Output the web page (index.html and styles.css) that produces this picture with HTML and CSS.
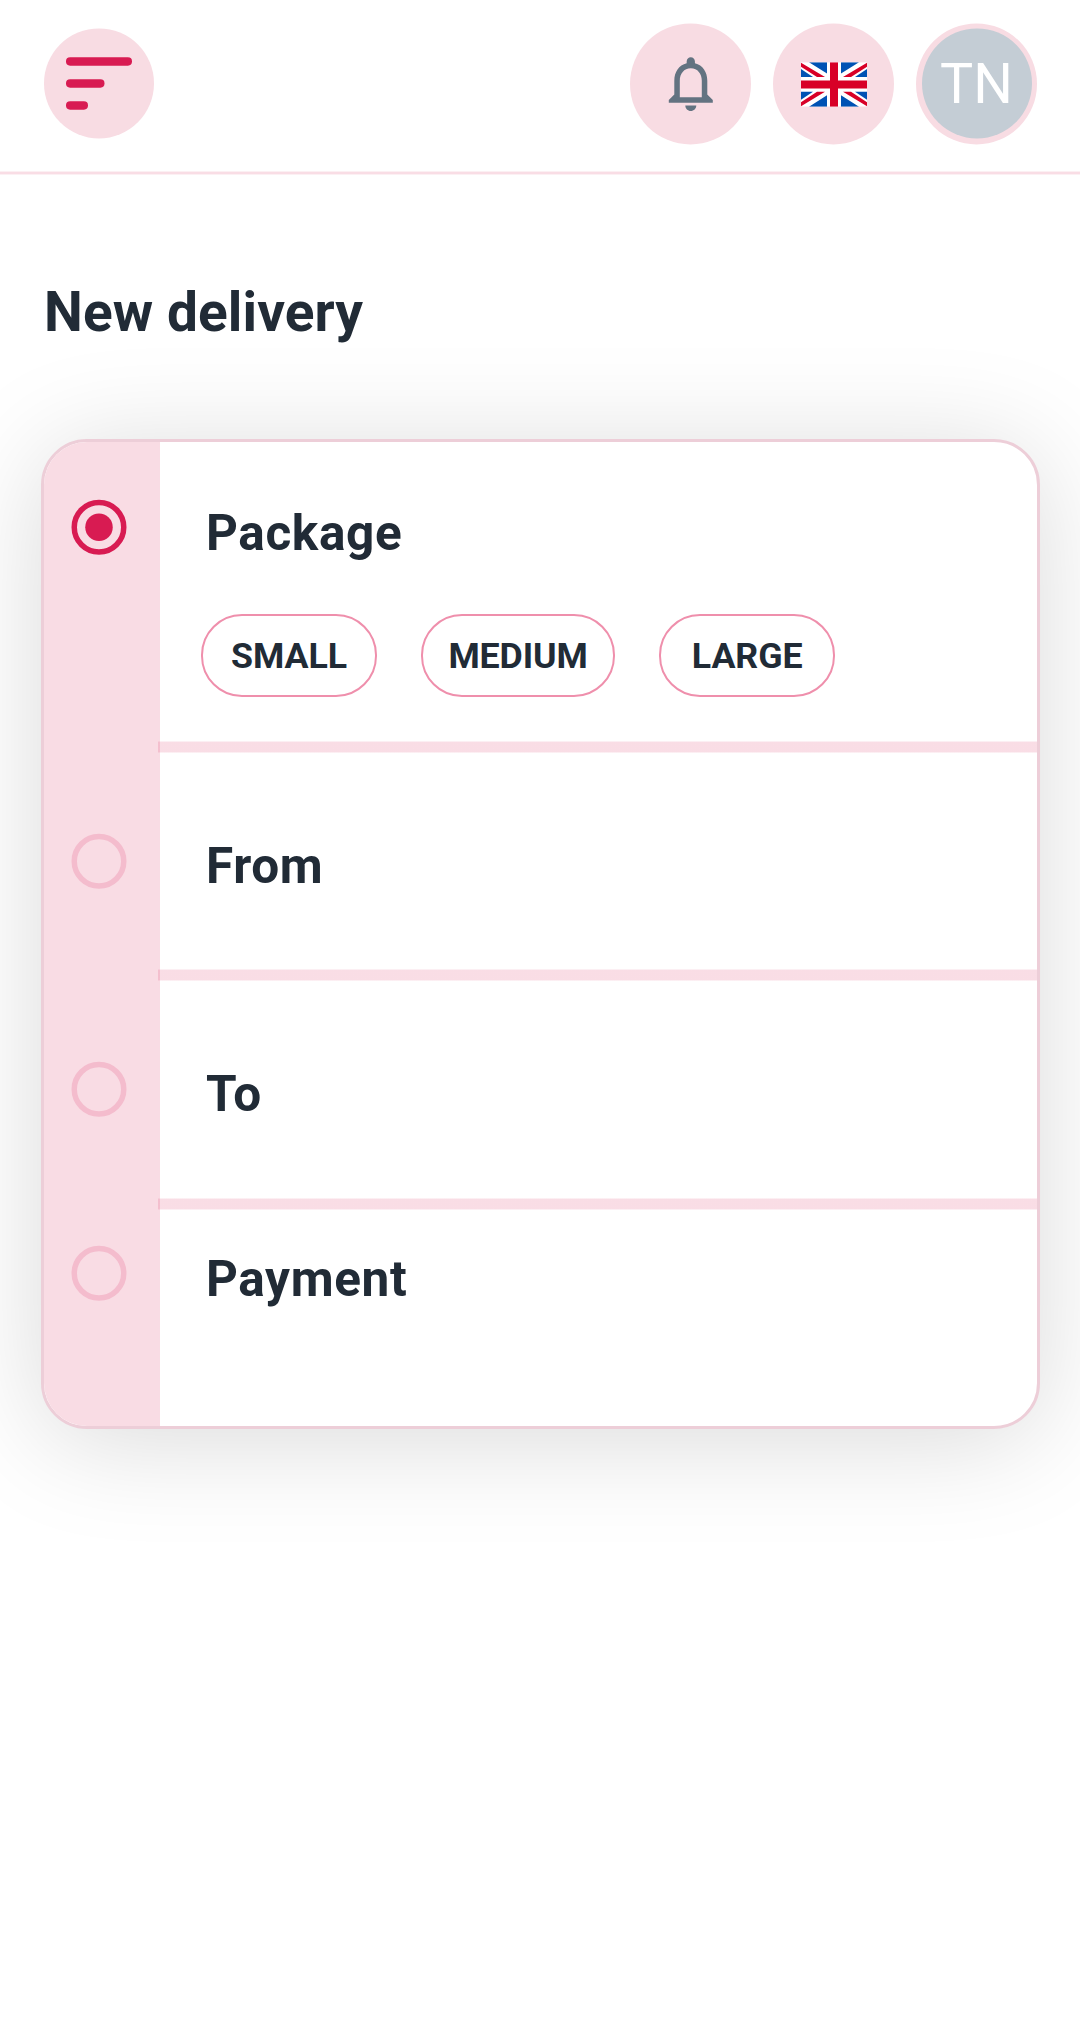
FILE: index.html
```html
<!DOCTYPE html>
<html lang="en">
<head>
<meta charset="utf-8">
<title>New delivery</title>
<link rel="stylesheet" href="styles.css">
</head>
<body>
<header class="topbar">
  <button class="menu" aria-label="Menu">
    <svg width="110" height="112" viewBox="0 0 110 112">
      <circle class="disc" cx="55" cy="55.4" r="55"/>
      <g class="bars">
        <rect x="22" y="29.2" width="66" height="8.5" rx="4.1"/>
        <rect x="22" y="51.2" width="38.5" height="8.5" rx="4.1"/>
        <rect x="22" y="73.2" width="22" height="8.5" rx="4.1"/>
      </g>
    </svg>
  </button>
  <nav class="actions">
    <button aria-label="Notifications">
      <svg width="121" height="122" viewBox="0 0 121 122">
        <circle class="disc" cx="60.5" cy="60.9" r="60.5"/>
        <path class="bell" transform="translate(27.8 27.4) scale(2.75)" d="M12 22c1.100 0 2-.9 2-2h-4c0 1.100.9 2 2 2zm6-6v-5c0-3.070-1.630-5.640-4.500-6.320V4c0-.83-.67-1.500-1.500-1.500s-1.500.67-1.500 1.500v.68C7.640 5.360 6 7.920 6 11v5l-2 2v1h16v-1l-2-2zm-2 1H8v-6c0-2.480 1.510-4.500 4-4.500s4 2.020 4 4.500v6z"/>
      </svg>
    </button>
    <button aria-label="Language: English">
      <svg width="121" height="122" viewBox="0 0 121 122">
        <circle class="disc" cx="60.5" cy="60.9" r="60.5"/>
        <svg x="28" y="39.2" width="66" height="44.5" viewBox="0 0 66 45" preserveAspectRatio="none">
          <rect class="white" width="66" height="45"/>
          <path class="blue" d="M8 0H26V11.500zM0 7L12 15H0zM58 0H40V11.500zM66 7L54 15H66zM8 45H26V33.500zM0 38L12 30H0zM58 45H40V33.500zM66 38L54 30H66z"/>
          <path class="red" d="M0 .5V4.500L16 15H24zM66 .5V4.500L50 15H42zM0 44.500V40.500L16 30H24zM66 44.500V40.500L50 30H42z"/>
          <path class="red" d="M29 0H37V18.500H66V26.500H37V45H29V26.500H0V18.500H29z"/>
        </svg>
      </svg>
    </button>
    <button class="avatar" aria-label="Account">
      <svg width="121" height="122" viewBox="0 0 121 122">
        <circle class="disc" cx="60.5" cy="60.9" r="60.5"/>
        <circle class="face" cx="61" cy="60.4" r="55"/>
        <text x="60.4" y="79.5" text-anchor="middle">TN</text>
      </svg>
    </button>
  </nav>
</header>
<main>
  <h1>New delivery</h1>
  <section class="card">
    <div class="step package">
      <div class="rail"><svg class="radio on" width="56" height="56" viewBox="0 0 56 56"><circle class="ring" cx="28" cy="28.2" r="24.75"/><circle class="dot" cx="28" cy="28.2" r="13.75"/></svg></div>
      <div class="body"><h2>Package</h2>
        <div class="chips"><button class="chip">SMALL</button><button class="chip">MEDIUM</button><button class="chip">LARGE</button></div>
      </div>
    </div>
    <div class="step from">
      <div class="rail"><svg class="radio" width="56" height="56" viewBox="0 0 56 56"><circle class="ring" cx="28" cy="28.3" r="24.75"/></svg></div>
      <div class="body"><h2>From</h2></div>
    </div>
    <div class="step to">
      <div class="rail"><svg class="radio" width="56" height="56" viewBox="0 0 56 56"><circle class="ring" cx="28" cy="28.3" r="24.75"/></svg></div>
      <div class="body"><h2>To</h2></div>
    </div>
    <div class="step payment">
      <div class="rail"><svg class="radio" width="56" height="56" viewBox="0 0 56 56"><circle class="ring" cx="28" cy="28.3" r="24.75"/></svg></div>
      <div class="body"><h2>Payment</h2></div>
    </div>
  </section>
</main>
</body>
</html>
```
FILE: styles.css
```css
* { box-sizing: border-box; }
body {
  margin: 0;
  min-height: 2028px;
  background: #fff;
  color: #212b36;
  font-family: Roboto, sans-serif;
  overflow-x: hidden;
}
button {
  padding: 0;
  border: 0;
  background: none;
  color: inherit;
  font-family: inherit;
}
svg { display: block; }

/* Top bar */
.topbar {
  display: flex;
  justify-content: space-between;
  align-items: flex-start;
  height: 174px;
  padding: 23px 43px 0 44px;
  border-bottom: 2px solid #f9dde5;
  box-shadow: 0 1px #fcf0f3, inset 0 -1px #fcf0f3;
}
.menu { margin-top: 5px; }
.actions { display: flex; gap: 22px; }
.disc { fill: #f8dce3; }
.bars { fill: #d81b52; }
.bell { fill: #637381; }
.face { fill: #c4cdd5; }
.avatar text { fill: #fff; font: 400 55.6px Roboto, sans-serif; }
.blue { fill: #0052b4; }
.white { fill: #fff; }
.red { fill: #d80027; }

/* Heading */
h1, h2 { margin: 0; font-weight: 700; }
h1 {
  padding: 105px 0 0 44px;
  height: 265px;
  font-size: 55px;
  line-height: 66px;
  letter-spacing: .1px;
}

/* Delivery steps */
.card {
  margin: 0 40px 0 41px;
  border: 3px solid #edced8;
  border-radius: 46px;
  overflow: hidden;
  box-shadow: 0 11px 110px rgba(0, 0, 0, .15);
  background: #fff;
}
.step { display: flex; }
.rail { width: 116px; padding-left: 27px; background: #f9dce4; }
.body { flex: 1; margin-left: -2px; padding-left: 48px; }
.step:not(.payment) .body {
  background: linear-gradient(rgba(216, 27, 82, .07) 1px, rgba(216, 27, 82, .15) 1px 11px, rgba(216, 27, 82, .07) 11px) bottom / 100% 12px no-repeat;
}
.package { height: 311px; }
.from { height: 228px; }
.to { height: 229px; }
.payment { height: 216px; }
.package .rail { padding-top: 57px; }
.from .rail, .to .rail { padding-top: 80px; }
.payment .rail { padding-top: 35px; }
h2 { font-size: 49.5px; line-height: 60px; letter-spacing: .65px; }
.package .body { padding-top: 61px; }
.from .body, .to .body { padding-top: 83px; }
.payment .body { padding-top: 39px; }
.ring { fill: none; stroke: #f4bccd; stroke-width: 5.5; }
.on .ring { stroke: #d81b52; }
.dot { fill: #d81b52; }

/* Size chips */
.chips { display: flex; gap: 44px; margin: 51px 0 0 -5px; }
.chip {
  min-width: 176px;
  height: 83px;
  padding: 0 25.4px;
  border: 2px solid #ef8fac;
  border-radius: 41px;
  font-size: 35.75px;
  font-weight: 700;
  letter-spacing: -.1px;
}
```
